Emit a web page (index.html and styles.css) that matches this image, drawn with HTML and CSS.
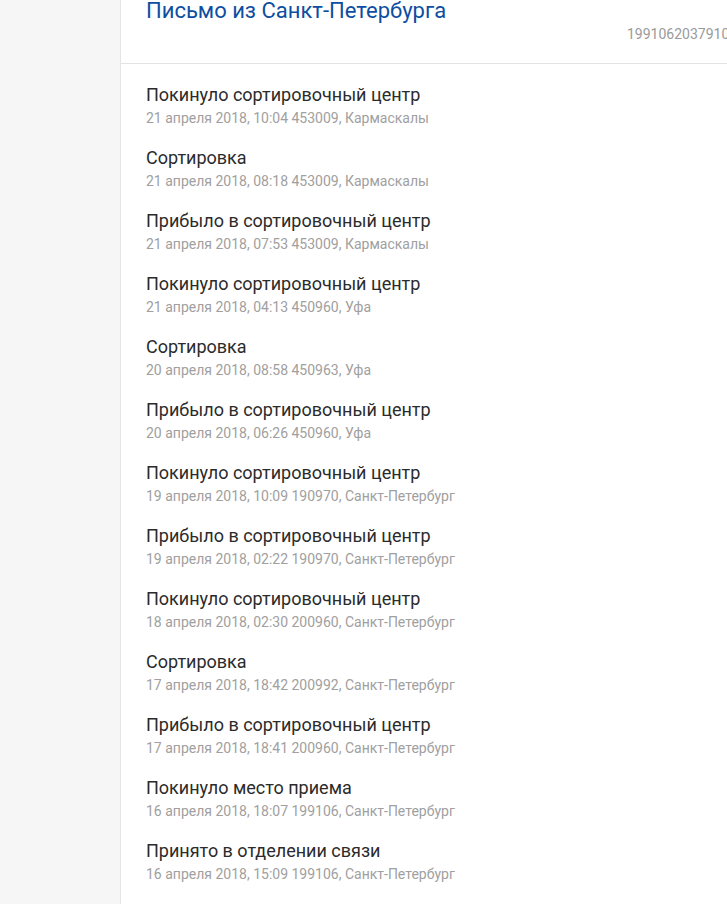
FILE: index.html
```html
<!DOCTYPE html>
<html lang="ru">
<head>
<meta charset="utf-8">
<link rel="stylesheet" href="styles.css">
</head>
<body>
<div class="layout">
  <aside class="sidebar"></aside>
  <main class="panel">
    <header class="head">
      <h1 class="title">Письмо из Санкт-Петербурга</h1>
      <div class="code">19910620379101</div>
    </header>
    <ul class="events">
      <li class="event"><div class="ev-title">Покинуло сортировочный центр</div><div class="ev-sub">21 апреля 2018, 10:04 453009, Кармаскалы</div></li>
      <li class="event"><div class="ev-title">Сортировка</div><div class="ev-sub">21 апреля 2018, 08:18 453009, Кармаскалы</div></li>
      <li class="event"><div class="ev-title">Прибыло в сортировочный центр</div><div class="ev-sub">21 апреля 2018, 07:53 453009, Кармаскалы</div></li>
      <li class="event"><div class="ev-title">Покинуло сортировочный центр</div><div class="ev-sub">21 апреля 2018, 04:13 450960, Уфа</div></li>
      <li class="event"><div class="ev-title">Сортировка</div><div class="ev-sub">20 апреля 2018, 08:58 450963, Уфа</div></li>
      <li class="event"><div class="ev-title">Прибыло в сортировочный центр</div><div class="ev-sub">20 апреля 2018, 06:26 450960, Уфа</div></li>
      <li class="event"><div class="ev-title">Покинуло сортировочный центр</div><div class="ev-sub">19 апреля 2018, 10:09 190970, Санкт-Петербург</div></li>
      <li class="event"><div class="ev-title">Прибыло в сортировочный центр</div><div class="ev-sub">19 апреля 2018, 02:22 190970, Санкт-Петербург</div></li>
      <li class="event"><div class="ev-title">Покинуло сортировочный центр</div><div class="ev-sub">18 апреля 2018, 02:30 200960, Санкт-Петербург</div></li>
      <li class="event"><div class="ev-title">Сортировка</div><div class="ev-sub">17 апреля 2018, 18:42 200992, Санкт-Петербург</div></li>
      <li class="event"><div class="ev-title">Прибыло в сортировочный центр</div><div class="ev-sub">17 апреля 2018, 18:41 200960, Санкт-Петербург</div></li>
      <li class="event"><div class="ev-title">Покинуло место приема</div><div class="ev-sub">16 апреля 2018, 18:07 199106, Санкт-Петербург</div></li>
      <li class="event"><div class="ev-title">Принято в отделении связи</div><div class="ev-sub">16 апреля 2018, 15:09 199106, Санкт-Петербург</div></li>
    </ul>
  </main>
</div>
</body>
</html>
```
FILE: styles.css
```css
html, body {
  margin: 0;
  padding: 0;
  height: 100%;
  overflow: hidden;
  background: #ffffff;
  font-family: Roboto, "Noto Sans", Arial, sans-serif;
}
.layout {
  display: flex;
  min-height: 100%;
}
.sidebar {
  width: 120px;
  flex: none;
  background: #f6f6f6;
  border-right: 1px solid #e4e4e4;
  box-shadow: 1px 0 1px rgba(0,0,0,0.04);
}
.panel {
  flex: none;
  width: 700px;
  background: #fff;
}
.head {
  height: 65px;
  border-bottom: 1px solid #e3e3e3;
  box-sizing: border-box;
}
.title {
  margin: -1px 0 0 25px;
  font-size: 22px;
  font-weight: 400;
  line-height: 23px;
  color: #0d4ea1;
  white-space: nowrap;
}
.code {
  margin: 4px 0 0 506px;
  font-size: 14px;
  line-height: 16px;
  color: #9a9a9a;
  white-space: nowrap;
}
.events {
  list-style: none;
  margin: 0;
  padding: 20px 0 0 25px;
}
.event {
  height: 43px;
  margin-bottom: 20px;
}
.ev-title {
  font-size: 18px;
  line-height: 21px;
  color: #2b2b2b;
  white-space: nowrap;
}
.ev-sub {
  margin-top: 5px;
  font-size: 14px;
  line-height: 17px;
  color: #a0a0a0;
  white-space: nowrap;
}
```
